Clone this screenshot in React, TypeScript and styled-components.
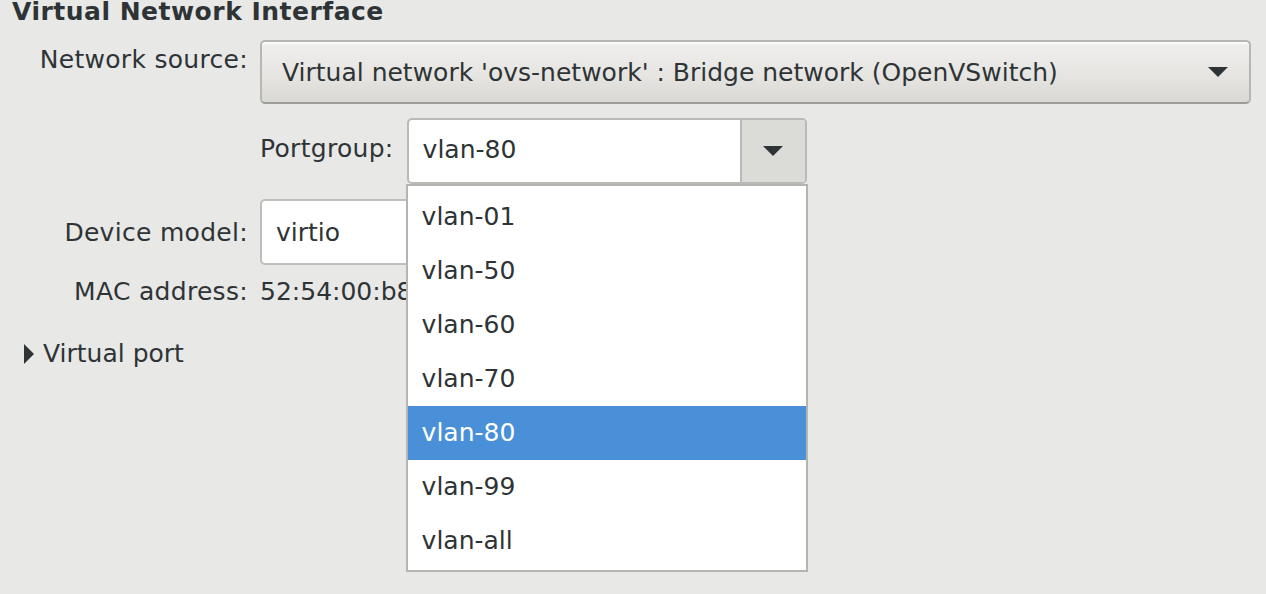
import React from "react";
import styled, { createGlobalStyle } from "styled-components";

const Global = createGlobalStyle`
  html, body { margin: 0; padding: 0; background: #e8e8e7; }
  body { font-family: "DejaVu Sans", "Noto Sans", sans-serif; font-size: 25px; color: #2e3436; }
  * { box-sizing: border-box; }
`;

const Page = styled.div`
  width: 1266px;
  height: 594px;
  overflow: hidden;
  padding-left: 12px;
  background: #e8e8e7;
`;

const Title = styled.h1`
  margin: 0;
  font-size: 25px;
  font-weight: bold;
  line-height: 23px;
  letter-spacing: 0.5px;
  color: #2e3436;
`;

const Form = styled.div`
  display: flex;
  flex-direction: column;
  margin-top: 17px;
`;

const Row = styled.div<{ $top?: number; $align?: string }>`
  display: flex;
  gap: 12px;
  align-items: ${(p) => p.$align ?? "center"};
  margin-top: ${(p) => p.$top ?? 0}px;
`;

const Label = styled.div<{ $pad?: number; $auto?: boolean }>`
  width: ${(p) => (p.$auto ? "auto" : "236px")};
  flex: none;
  text-align: right;
  line-height: 29px;
  letter-spacing: 0.3px;
  padding-top: ${(p) => p.$pad ?? 0}px;
  white-space: nowrap;
`;

const Value = styled.div`
  line-height: 29px;
  white-space: nowrap;
`;

const ComboButton = styled.div`
  width: 991px;
  height: 64px;
  display: flex;
  align-items: center;
  justify-content: space-between;
  padding: 0 21px 0 20px;
  border: 2px solid #b6b6b3;
  border-bottom-color: #9c9c97;
  border-radius: 5px;
  background: linear-gradient(to bottom, #f0efed 0%, #e6e5e2 55%, #dad8d4 100%);
  box-shadow: inset 0 2px 0 rgba(255, 255, 255, 0.8);
  white-space: nowrap;
`;

const SubRow = styled.div`
  display: flex;
  align-items: flex-start;
  gap: 13px;
`;

const ComboEntry = styled.div`
  position: relative;
  width: 400px;
  height: 66px;
  display: flex;
  border: 2px solid #b9b9b6;
  border-radius: 5px;
  background: #ffffff;
`;

const EntryText = styled.div`
  flex: 1;
  display: flex;
  align-items: center;
  padding: 0 14px 3px 14px;
  white-space: nowrap;
  overflow: hidden;
`;

const ArrowButton = styled.div`
  width: 65px;
  flex: none;
  display: flex;
  align-items: center;
  justify-content: center;
  border-left: 2px solid #b9b9b6;
  background: #dbdbd8;
  border-radius: 0 3px 3px 0;
`;

const Entry = styled.div`
  width: 320px;
  height: 66px;
  display: flex;
  align-items: center;
  padding: 0 14px;
  border: 2px solid #bdbdba;
  border-radius: 5px;
  background: #ffffff;
`;

const Expander = styled.div`
  display: flex;
  align-items: center;
  gap: 9px;
  margin: 33px 0 0 12px;
  line-height: 29px;
`;

const Popup = styled.div`
  position: absolute;
  top: calc(100% + 2px);
  left: -3px;
  width: 402px;
  padding: 4px 0 2px;
  border: 2px solid #b4b4b1;
  background: #ffffff;
  z-index: 10;
`;

const Item = styled.div<{ $selected?: boolean }>`
  height: 54px;
  line-height: 54px;
  padding-left: 14px;
  background: ${(p) => (p.$selected ? "#4a90d9" : "transparent")};
  color: ${(p) => (p.$selected ? "#ffffff" : "#2e3436")};
  white-space: nowrap;
`;

const DownArrow = () => (
  <svg width="20" height="10" viewBox="0 0 20 10" aria-hidden="true">
    <path d="M0 0 H20 L10 10 Z" fill="#2e3436" />
  </svg>
);

const RightArrow = () => (
  <svg width="10" height="20" viewBox="0 0 10 20" aria-hidden="true">
    <path d="M0 0 L10 10 L0 20 Z" fill="#2e3436" />
  </svg>
);

const items = ["vlan-01", "vlan-50", "vlan-60", "vlan-70", "vlan-80", "vlan-99", "vlan-all"];

export default function App() {
  return (
    <>
      <Global />
      <Page>
        <Title>Virtual Network Interface</Title>
        <Form>
          <Row $align="flex-start">
            <Label $pad={5}>Network source:</Label>
            <ComboButton>
              <span>Virtual network 'ovs-network' : Bridge network (OpenVSwitch)</span>
              <DownArrow />
            </ComboButton>
          </Row>
          <Row $top={14} $align="flex-start">
            <Label />
            <SubRow>
              <Label $auto $pad={16}>Portgroup:</Label>
              <ComboEntry>
                <EntryText>vlan-80</EntryText>
                <ArrowButton>
                  <DownArrow />
                </ArrowButton>
                <Popup>
                  {items.map((it) => (
                    <Item key={it} $selected={it === "vlan-80"}>
                      {it}
                    </Item>
                  ))}
                </Popup>
              </ComboEntry>
            </SubRow>
          </Row>
          <Row $top={15}>
            <Label>Device model:</Label>
            <Entry>virtio</Entry>
          </Row>
          <Row $top={12}>
            <Label>MAC address:</Label>
            <Value>52:54:00:b8:4e:2a</Value>
          </Row>
        </Form>
        <Expander>
          <RightArrow />
          <span>Virtual port</span>
        </Expander>
      </Page>
    </>
  );
}
